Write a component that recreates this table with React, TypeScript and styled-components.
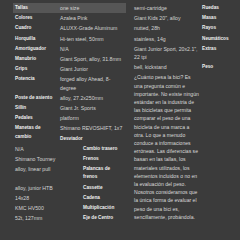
import React from 'react';
import styled, { createGlobalStyle } from 'styled-components';

type Item = { kind: 'term' | 'detail'; text: string; hl?: boolean; long?: boolean };

const t = (text: string, hl = false): Item => ({ kind: 'term', text, hl });
const d = (text: string, hl = false): Item => ({ kind: 'detail', text, hl });

const PESO =
  '¿Cuánto pesa la bici? Es una pregunta común e importante. No existe ningún estándar en la industria de las bicicletas que permita comparar el peso de una bicicleta de una marca a otra. Lo que a menudo conduce a informaciones erróneas. Las diferencias se basan en las tallas, los materiales utilizados, los elementos incluidos o no en la evaluación del peso. Nosotros consideramos que la única forma de evaluar el peso de una bici es, sencillamente, probándola.';

// la tabla sigue de una columna a la otra
const LEFT: Item[] = [
  t('Tallas', true), d('one size', true),
  t('Colores'), d('Azalea Pink'),
  t('Cuadro'), d('ALUXX-Grade Aluminum'),
  t('Horquilla'), d('Hi-ten steel, 50mm'),
  t('Amortiguador'), d('N/A'),
  t('Manubrio'), d('Giant Sport, alloy, 31.8mm'),
  t('Grips'), d('Giant Junior'),
  t('Potencia'), d('forged alloy Ahead, 8-degree'),
  t('Poste de asiento'), d('alloy, 27.2x250mm'),
  t('Sillín'), d('Giant Jr. Sports'),
  t('Pedales'), d('platform'),
  t('Manetas de cambio'), d('Shimano REVOSHIFT, 1x7'),
  t('Desviador'), d('N/A'),
  t('Cambio trasero'), d('Shimano Tourney'),
  t('Frenos'), d('alloy, linear pull'),
  t('Palancas de frenos'), d('alloy, junior HTB'),
  t('Cassette'), d('14x28'),
  t('Cadena'), d('KMC HV500'),
  t('Multiplicación'), d('52t, 127mm'),
  t('Eje de Centro'),
];

const RIGHT: Item[] = [
  d('semi-cartridge'),
  t('Ruedas'), d('Giant Kids 20", alloy'),
  t('Masas'), d('nutted, 28h'),
  t('Rayos'), d('stainless, 14g'),
  t('Neumáticos'), d('Giant Junior Sport, 20x2.1", 22 tpi'),
  t('Extras'), d('bell, kickstand'),
  t('Peso'), { kind: 'detail', text: PESO, long: true },
];

export default function App() {
  return (
    <>
      <GlobalStyle />
      <Page>
        <Columns>
          <SpecList items={LEFT} />
          <SpecList items={RIGHT} />
        </Columns>
      </Page>
    </>
  );
}

function SpecList({ items }: { items: Item[] }) {
  return (
    <List>
      {items.map((it, i) =>
        it.kind === 'term' ? (
          <Term key={i} $hl={it.hl}>{it.text}</Term>
        ) : (
          <Detail key={i} $hl={it.hl} $long={it.long}>{it.text}</Detail>
        )
      )}
    </List>
  );
}

const GlobalStyle = createGlobalStyle`
  html, body {
    margin: 0;
    padding: 0;
    background: #3b3b3b;
    overflow: hidden;
  }
`;

const Page = styled.div`
  width: 240px;
  height: 240px;
  overflow: hidden;
  background: #3b3b3b;
  font-family: "Liberation Sans", Arial, sans-serif;
  line-height: 8.2px;
`;

const Columns = styled.div`
  display: flex;
  gap: 6px;
  padding: 3px 0 0 13px;
  width: 300px;
`;

const List = styled.dl`
  width: 113px;
  flex: none;
  margin: 0;
  overflow: hidden;
`;

const Term = styled.dt<{ $hl?: boolean }>`
  float: left;
  box-sizing: border-box;
  width: 45px;
  padding: 1px 2px;
  font-size: 4.7px;
  font-weight: bold;
  color: #f0f0f0;
  background: ${(p) => (p.$hl ? '#565656' : 'transparent')};
`;

const Detail = styled.dd<{ $hl?: boolean; $long?: boolean }>`
  float: left;
  box-sizing: border-box;
  width: 68px;
  margin: 0;
  padding: 1px 0 1px 2px;
  font-size: ${(p) => (p.$long ? '5.1px' : '5.2px')};
  color: ${(p) => (p.$long ? '#dadada' : '#d4d4d4')};
  background: ${(p) => (p.$hl ? '#565656' : 'transparent')};
`;
